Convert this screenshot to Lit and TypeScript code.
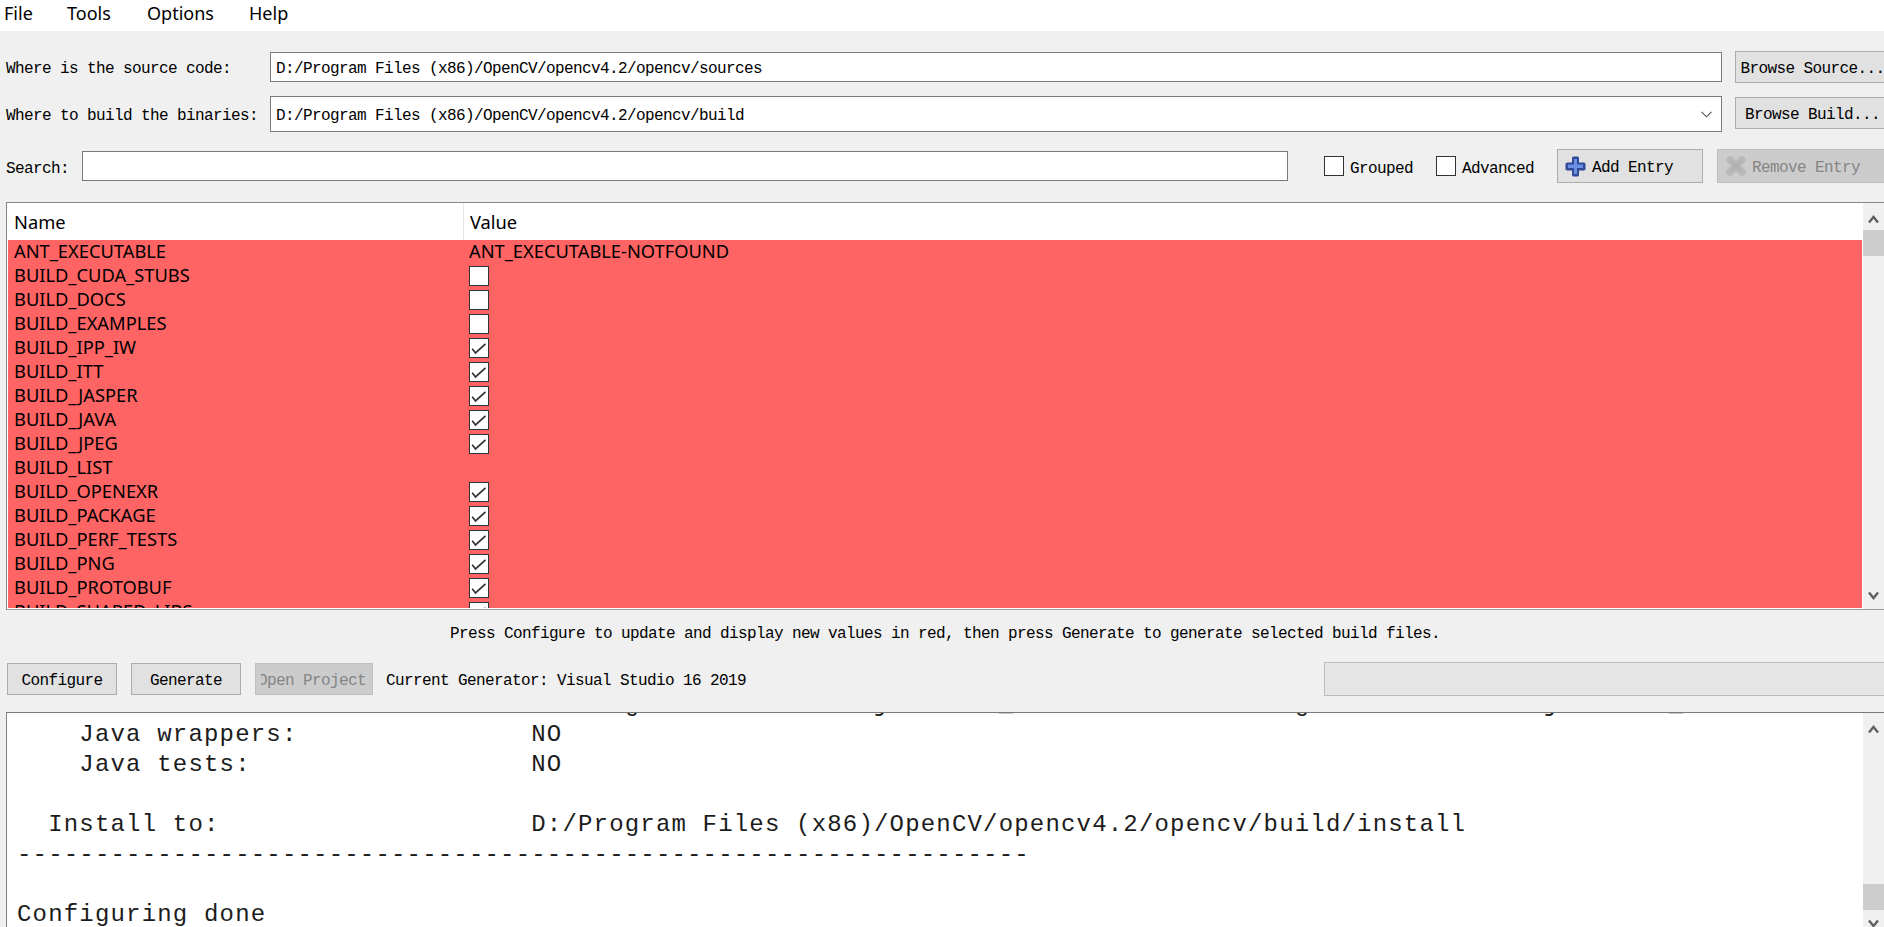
import { LitElement, html, css, svg } from "lit";
import { customElement } from "lit/decorators.js";

type Row = { name: string; value?: string; checked?: boolean };

const ROWS: Row[] = [
  { name: "ANT_EXECUTABLE", value: "ANT_EXECUTABLE-NOTFOUND" },
  { name: "BUILD_CUDA_STUBS", checked: false },
  { name: "BUILD_DOCS", checked: false },
  { name: "BUILD_EXAMPLES", checked: false },
  { name: "BUILD_IPP_IW", checked: true },
  { name: "BUILD_ITT", checked: true },
  { name: "BUILD_JASPER", checked: true },
  { name: "BUILD_JAVA", checked: true },
  { name: "BUILD_JPEG", checked: true },
  { name: "BUILD_LIST", value: "" },
  { name: "BUILD_OPENEXR", checked: true },
  { name: "BUILD_PACKAGE", checked: true },
  { name: "BUILD_PERF_TESTS", checked: true },
  { name: "BUILD_PNG", checked: true },
  { name: "BUILD_PROTOBUF", checked: true },
  { name: "BUILD_SHARED_LIBS", checked: true },
];

const JDK = "D:/Program Files/Java/jdk1.8.0_241/include";
const pad = (s: string) => s.padEnd(33, " ");
const LOG = [
  pad("    JNI:") + JDK + " " + JDK + "/win32 " + JDK,
  pad("    Java wrappers:") + "NO",
  pad("    Java tests:") + "NO",
  "",
  pad("  Install to:") + "D:/Program Files (x86)/OpenCV/opencv4.2/opencv/build/install",
  "-".repeat(65),
  "",
  "Configuring done",
].join("\n");

@customElement("app-root")
export class AppRoot extends LitElement {
  static styles = css`
    :host {
      display: block;
      width: 1884px;
      height: 927px;
      overflow: hidden;
      background: #f0f0f0;
      color: #000;
      font: 16px/24px "Liberation Mono", monospace;
      letter-spacing: -0.6px;
    }
    .menu {
      display: flex;
      height: 31px;
      background: #fff;
      letter-spacing: 0;
      font: 18px/27px "Noto Sans", sans-serif;
    }
    .menu span { flex: none; }
    .m1 { margin-left: 4px; width: 63px; }
    .m2 { width: 80px; }
    .m3 { width: 102px; }
    .row {
      display: flex;
      align-items: center;
      padding-left: 6px;
      white-space: nowrap;
    }
    .r1 { height: 32px; margin-top: 20px; }
    .r2 { height: 36px; margin-top: 13px; }
    .r3 { height: 34px; margin-top: 17px; }
    .lbl { flex: none; width: 264px; padding-top: 4px; box-sizing: border-box; }
    .slbl { flex: none; width: 76px; padding-top: 6px; box-sizing: border-box; }
    .field {
      flex: none;
      box-sizing: border-box;
      background: #fff;
      border: 1px solid #7a7a7a;
      display: flex;
      align-items: center;
      justify-content: space-between;
      padding: 3px 9px 0 5px;
    }
    .f1 { width: 1452px; height: 30px; }
    .f2 { width: 1452px; height: 36px; }
    .f3 { width: 1206px; height: 30px; }
    .combo-arrow { width: 11px; height: 7px; fill: none; stroke: #555; stroke-width: 1.1; margin-top: -3px; }
    .btn {
      flex: none;
      box-sizing: border-box;
      display: flex;
      align-items: center;
      justify-content: center;
      background: #e1e1e1;
      border: 1px solid #adadad;
      white-space: nowrap;
      overflow: hidden;
    }
    .btn > span { padding-top: 3px; }
    .browse { width: 155px; margin-left: 13px; }
    .b1 { height: 32px; }
    .b2 { height: 32px; margin-top: -3px; }
    .btn.b2 > span { padding-top: 5px; }
    .cb {
      flex: none;
      box-sizing: border-box;
      width: 20px;
      height: 20px;
      background: #fff;
      border: 1px solid #333;
      display: block;
    }
    .cb svg { display: block; width: 18px; height: 18px; fill: none; stroke: #333; stroke-width: 1.7; }
    .check { display: flex; align-items: center; gap: 6px; flex: none; }
    .check span.label { padding-top: 5px; }
    .c1 { margin-left: 36px; width: 89px; margin-right: 23px; }
    .c2 { width: 98px; margin-right: 23px; }
    .add { width: 146px; height: 34px; justify-content: flex-start; padding-left: 7px; gap: 6px; }
    .add svg, .rem svg { flex: none; }
    .rem {
      width: 190px;
      height: 34px;
      margin-left: 14px;
      justify-content: flex-start;
      padding-left: 8px;
      gap: 6px;
      background: #cccccc;
      border-color: #bfbfbf;
      color: #858585;
    }
    .table {
      display: flex;
      box-sizing: border-box;
      height: 408px;
      margin: 19px 0 0 6px;
      background: #fff;
      border-top: 1px solid #828790;
      border-left: 1px solid #828790;
      border-bottom: 1px solid #9a9a9a;
    }
    .view {
      flex: none;
      width: 1854px;
      height: 405px;
      margin-left: 1px;
      overflow: hidden;
      letter-spacing: 0;
      font: 18.3px/24px "Noto Sans", sans-serif;
    }
    .head, .tr { display: grid; grid-template-columns: 455px 1fr; }
    .head { height: 37px; line-height: 37px; }
    .head div + div { border-left: 1px solid #e5e5e5; }
    .head div:first-child, .tr div:first-child { padding-left: 6px; }
    .head div + div, .tr div + div { padding-left: 6px; }
    .tr { height: 24px; background: #ff6464; line-height: 22px; }
    .tr .cb { margin-top: 2px; }
    .sb {
      flex: none;
      width: 21px;
      margin-left: 1px;
      background: #f0f0f0;
      display: flex;
      flex-direction: column;
    }
    .sb-btn {
      flex: none;
      height: 27px;
      display: flex;
      align-items: center;
      justify-content: center;
    }
    .sb-up { padding-top: 5px; box-sizing: border-box; }
    .sb-btn svg { width: 11px; height: 9px; fill: none; stroke: #606060; stroke-width: 2.4; }
    .thumb { flex: none; height: 26px; background: #cdcdcd; }
    .spacer { flex: 1; }
    .status { height: 52px; padding-top: 12px; box-sizing: border-box; text-align: center; padding-left: 6px; white-space: nowrap; }
    .actions {
      display: flex;
      align-items: center;
      height: 34px;
      padding-left: 7px;
      white-space: nowrap;
    }
    .act { width: 110px; height: 32px; margin-right: 14px; }
    .open {
      width: 118px;
      height: 32px;
      background: #cccccc;
      border-color: #bfbfbf;
      color: #858585;
    }
    .btn > span.clip { display: block; width: 106px; overflow: hidden; text-indent: -3px; }
    .gen { flex: none; width: 938px; margin-left: 13px; padding-top: 4px; box-sizing: border-box; }
    .progress {
      flex: none;
      box-sizing: border-box;
      width: 570px;
      height: 34px;
      background: #e6e6e6;
      border: 1px solid #bcbcbc;
    }
    .log {
      display: flex;
      box-sizing: border-box;
      height: 225px;
      margin: 16px 0 0 6px;
      background: #fff;
      border-top: 1px solid #7a7a7a;
      border-left: 1px solid #808080;
    }
    .log-view {
      flex: none;
      box-sizing: border-box;
      width: 1855px;
      height: 224px;
      padding-left: 10px;
      overflow: hidden;
    }
    pre {
      margin: -23px 0 0;
      font: 24px/30px "Liberation Mono", monospace;
      letter-spacing: 1.18px;
      color: #1c1c1c;
    }
  `;

  private chevron(up: boolean) {
    return html`<svg viewBox="0 0 11 9">
      ${svg`<path d=${up ? "M1 7.5 5.5 2 10 7.5" : "M1 1.5 5.5 7 10 1.5"}></path>`}
    </svg>`;
  }

  private scrollbar(offset: number) {
    return html`<div class="sb">
      <div class="sb-btn sb-up">${this.chevron(true)}</div>
      <div class="thumb" style="margin-top:${offset}px"></div>
      <div class="spacer"></div>
      <div class="sb-btn">${this.chevron(false)}</div>
    </div>`;
  }

  private checkbox(checked: boolean) {
    return html`<span class="cb">
      ${checked
        ? html`<svg viewBox="0 0 18 18">${svg`<path d="M2.2 9.8 5.5 14 15.5 4.8"></path>`}</svg>`
        : ""}
    </span>`;
  }

  private addIcon() {
    return html`<svg width="21" height="21" viewBox="0 0 21 21">
      ${svg`
        <path d="M8 0.5h5l1 1v5h5l1.5 1v6l-1.5 1h-5v5l-1 1h-5l-1-1v-5h-5l-1.5-1v-6l1.5-1h5v-5z" fill="#2f4a98"></path>
        <path d="M9 3h3v5.5h6v3.5h-6v6h-3v-6h-6v-3.5h6z" fill="#6d8fe2"></path>
      `}
    </svg>`;
  }

  private removeIcon() {
    return html`<svg width="20" height="20" viewBox="0 0 20 20">
      ${svg`
        <path d="M4 4 16 16M16 4 4 16" stroke="#b9b9b9" stroke-width="7.5" stroke-linecap="round"></path>
        <path d="M5 5 15 15M15 5 5 15" stroke="#b0b0b0" stroke-width="2.5"></path>
      `}
    </svg>`;
  }

  render() {
    return html`
      <div class="menu">
        <span class="m1">File</span><span class="m2">Tools</span><span class="m3">Options</span><span>Help</span>
      </div>

      <div class="row r1">
        <span class="lbl">Where is the source code:</span>
        <div class="field f1">D:/Program Files (x86)/OpenCV/opencv4.2/opencv/sources</div>
        <div class="btn browse b1"><span>Browse Source...</span></div>
      </div>

      <div class="row r2">
        <span class="lbl">Where to build the binaries:</span>
        <div class="field f2">
          <span>D:/Program Files (x86)/OpenCV/opencv4.2/opencv/build</span>
          <svg class="combo-arrow" viewBox="0 0 11 7">${svg`<path d="M0.5 0.8 5.5 5.8 10.5 0.8"></path>`}</svg>
        </div>
        <div class="btn browse b2"><span>Browse Build...</span></div>
      </div>

      <div class="row r3">
        <span class="slbl">Search:</span>
        <div class="field f3"></div>
        <label class="check c1">${this.checkbox(false)}<span class="label">Grouped</span></label>
        <label class="check c2">${this.checkbox(false)}<span class="label">Advanced</span></label>
        <div class="btn add">${this.addIcon()}<span>Add Entry</span></div>
        <div class="btn rem">${this.removeIcon()}<span>Remove Entry</span></div>
      </div>

      <div class="table">
        <div class="view">
          <div class="head"><div>Name</div><div>Value</div></div>
          ${ROWS.map(
            (r) => html`<div class="tr">
              <div>${r.name}</div>
              <div>${r.checked === undefined ? r.value : this.checkbox(r.checked)}</div>
            </div>`
          )}
        </div>
        ${this.scrollbar(0)}
      </div>

      <div class="status">Press Configure to update and display new values in red, then press Generate to generate selected build files.</div>

      <div class="actions">
        <div class="btn act"><span>Configure</span></div>
        <div class="btn act"><span>Generate</span></div>
        <div class="btn open"><span class="clip">Open Project</span></div>
        <span class="gen">Current Generator: Visual Studio 16 2019</span>
        <div class="progress"></div>
      </div>

      <div class="log">
        <div class="log-view"><pre>${LOG}</pre></div>
        ${this.scrollbar(144)}
      </div>
    `;
  }
}
